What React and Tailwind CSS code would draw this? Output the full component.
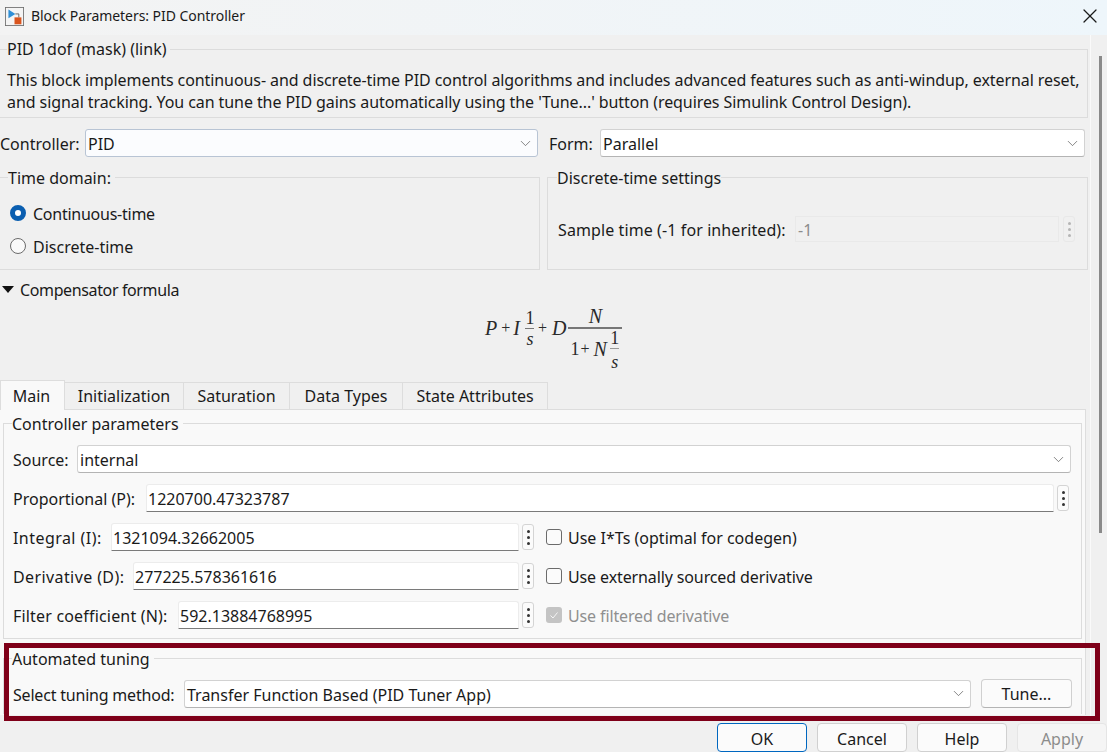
import { ChevronDown, X } from 'lucide-react'

const fieldsetClass = 'border border-[#dcdcdc] min-w-0'
const legendClass = 'leading-[22px] pt-[2px]'

function Dots({ faint }) {
    return (
        <div className={`w-[12px] h-[26px] shrink-0 rounded-[3px] border flex flex-col items-center justify-center gap-[3px] ${faint ? 'border-[#e8e8e8]' : 'border-[#d4d4d4] bg-[#fbfbfb]'}`}>
            <span className={`w-[3px] h-[3px] rounded-full ${faint ? 'bg-[#b5b5b5]' : 'bg-[#333333]'}`}></span>
            <span className={`w-[3px] h-[3px] rounded-full ${faint ? 'bg-[#b5b5b5]' : 'bg-[#333333]'}`}></span>
            <span className={`w-[3px] h-[3px] rounded-full ${faint ? 'bg-[#b5b5b5]' : 'bg-[#333333]'}`}></span>
        </div>
    )
}

function Select({ value, className }) {
    return (
        <div className={`h-[28px] flex items-center justify-between pl-[2px] pr-[3px] rounded-[3px] border ${className}`}>
            <span className="pt-[2px]">{value}</span>
            <ChevronDown size={17} strokeWidth={1} className="text-[#555555]" />
        </div>
    )
}

const plainSelect = 'bg-white border-[#d2d2d2] border-b-[#b4b4b4]'

function NumberField({ label, value, inputClass, labelClass }) {
    return (
        <>
            <span className={`shrink-0 pt-[2px] ${labelClass}`}>{label}</span>
            <div className={`h-[28px] flex items-center pl-[1px] bg-white border border-[#ececec] border-b-[#7a7a7a] rounded-t-[3px] ${inputClass}`}>
                <span className="pt-[2px]">{value}</span>
            </div>
        </>
    )
}

function Check({ label, disabled, labelClass }) {
    return (
        <div className="flex items-center gap-[6px] ml-[12px]">
            {disabled ? (
                <div className="w-[16px] h-[16px] rounded-[3px] bg-[#c4c4c4] flex items-center justify-center">
                    <svg width="10" height="10" viewBox="0 0 10 10" fill="none" stroke="#f5f5f5" strokeWidth="1">
                        <path d="M1.5 5.5 L4 8 L8.5 2.5" />
                    </svg>
                </div>
            ) : (
                <div className="w-[16px] h-[16px] rounded-[3px] border border-[#6b6b6b] bg-[#fbfbfb]"></div>
            )}
            <span className={`pt-[2px] ${disabled ? 'text-[#8f8f8f]' : ''} ${labelClass || ''}`}>{label}</span>
        </div>
    )
}

function Formula() {
    return (
        <div className="h-[66px] mt-[5px] pl-[485px] flex items-start text-[#2a2a2a] italic text-[20px] font-['Liberation_Serif',serif]">
            <div className="flex items-center h-[44px]">
                <span>P</span>
                <span className="not-italic text-[16px] ml-[4px]">+</span>
                <span className="ml-[3px]">I</span>
                <span className="flex flex-col items-center w-[10px] ml-[5px]">
                    <span className="not-italic text-[18px] leading-[20px]">1</span>
                    <span className="w-[9px] h-px bg-[#777777]"></span>
                    <span className="text-[18px] leading-[20px]">s</span>
                </span>
                <span className="not-italic text-[16px] ml-[3px]">+</span>
                <span className="ml-[5px]">D</span>
            </div>
            <div className="flex flex-col w-[54px] ml-[2px]">
                <span className="h-[21px] leading-[20px] text-center">N</span>
                <span className="h-[2px] bg-[#777777]"></span>
                <div className="flex items-start pl-[2px]">
                    <span className="not-italic text-[18px] leading-[20px] mt-[10px]">1</span>
                    <span className="not-italic text-[16px] leading-[20px] mt-[10px] ml-[1px]">+</span>
                    <span className="leading-[20px] mt-[10px] ml-[4px]">N</span>
                    <span className="flex flex-col items-center w-[10px] ml-[3px]">
                        <span className="not-italic text-[18px] leading-[19px]">1</span>
                        <span className="w-[9px] h-px bg-[#999999]"></span>
                        <span className="text-[18px] leading-[20px] mt-[3px]">s</span>
                    </span>
                </div>
            </div>
        </div>
    )
}

export default function App() {
    return (
        <div className="w-[1107px] h-[752px] overflow-hidden relative flex flex-col bg-[#f0f0f0] text-[#1a1a1a] text-[16px] leading-[22px] font-['Noto_Sans','Open_Sans',sans-serif]">
            <div className="h-[35px] shrink-0 flex items-center justify-between pl-[5px] pr-[5px] pb-[3px] bg-gradient-to-r from-[#f3f3f3] to-[#eef6fb]">
                <div className="flex items-center gap-[7px]">
                    <svg width="19" height="19" viewBox="0 0 22 22">
                        <rect x="0.5" y="0.5" width="21" height="21" fill="#f4f4f4" stroke="#6f6f6f" />
                        <path d="M4 3 L4 13 L12 8 Z" fill="#2f8fd6" />
                        <path d="M12 8 H16 V12" fill="none" stroke="#555555" strokeWidth="1" />
                        <rect x="11" y="12" width="8" height="8" fill="#d9541e" />
                    </svg>
                    <span className="text-[14px] tracking-[-0.05px]">Block Parameters: PID Controller</span>
                </div>
                <X size={24} strokeWidth={1.25} />
            </div>

            <div className="flex-1 min-h-0 flex">
                <div className="w-[1090px] shrink-0 flex flex-col pr-[2px]">
                    <fieldset className={`${fieldsetClass} mt-[3px] h-[80px] pl-[7px] border-l-0`}>
                        <legend className="leading-[22px] pr-[4px]">PID 1dof (mask) (link)</legend>
                        <p className="mt-[10px] leading-[21.5px] tracking-[-0.08px] whitespace-nowrap">
                            This block implements continuous- and discrete-time PID control algorithms and includes advanced features such as anti-windup, external reset,
                            <br />
                            and signal tracking. You can tune the PID gains automatically using the 'Tune...' button (requires Simulink Control Design).
                        </p>
                    </fieldset>

                    <div className="flex items-center mt-[11px] h-[28px]">
                        <span className="w-[85px] shrink-0 pt-[2px]">Controller:</span>
                        <Select value="PID" className="w-[453px] bg-[#fbfcfe] border-[#b8c4d4]" />
                        <span className="ml-[11px] w-[51px] shrink-0 pt-[2px]">Form:</span>
                        <Select value="Parallel" className={`w-[485px] ${plainSelect}`} />
                    </div>

                    <div className="flex gap-[7px] mt-[8px]">
                        <fieldset className={`${fieldsetClass} w-[540px] h-[105px] pl-[8px] border-l-0`}>
                            <legend className={`${legendClass} pr-[4px]`}>Time domain:</legend>
                            <div className="flex items-center gap-[7px] mt-[13px] h-[22px] pl-[2px]">
                                <span className="w-[16px] h-[16px] rounded-full border-[5px] border-[#0a5eb0] bg-white"></span>
                                <span className="pt-[2px] tracking-[-0.25px]">Continuous-time</span>
                            </div>
                            <div className="flex items-center gap-[7px] mt-[11px] h-[22px] pl-[2px]">
                                <span className="w-[16px] h-[16px] rounded-full border border-[#6b6b6b] bg-[#fafafa]"></span>
                                <span className="pt-[2px]">Discrete-time</span>
                            </div>
                        </fieldset>
                        <fieldset className={`${fieldsetClass} flex-1 h-[105px] pl-[10px]`}>
                            <legend className={`${legendClass} -ml-[1px]`}>Discrete-time settings</legend>
                            <div className="flex items-center mt-[27px] h-[26px]">
                                <span className="w-[237px] shrink-0 pt-[2px] tracking-[0.1px]">Sample time (-1 for inherited):</span>
                                <div className="w-[264px] h-[26px] flex items-center pl-[2px] border border-[#e9e9e9] text-[#8c8c8c]">
                                    <span className="pt-[2px]">-1</span>
                                </div>
                                <div className="ml-[4px]"><Dots faint /></div>
                            </div>
                        </fieldset>
                    </div>

                    <div className="flex items-center mt-[9px] h-[22px]">
                        <svg width="14" height="8" viewBox="0 0 14 8" className="ml-[1px]"><path d="M1 0 H13 L7 7 Z" fill="#111111" /></svg>
                        <span className="ml-[5px] tracking-[-0.37px]">Compensator formula</span>
                    </div>

                    <Formula />

                    <div className="flex items-end h-[30px] mt-[8px] relative z-10">
                        <div className="w-[65px] h-[30px] pr-[2px] flex items-center justify-center bg-[#f9f9f9] border border-b-0 border-[#dddddd]">Main</div>
                        {[['Initialization', 'w-[119px]'], ['Saturation', 'w-[106px]'], ['Data Types', 'w-[113px]'], ['State Attributes', 'w-[145px]']].map(([name, width]) => (
                            <div key={name} className={`${width} h-[28px] flex items-center justify-center border-r border-t border-b border-[#dddddd]`}>{name}</div>
                        ))}
                    </div>

                    <div className="h-[306px] -mt-px w-[1086px] bg-[#f9f9f9] border-t border-r border-[#dddddd] px-[3px]">
                        <fieldset className={`${fieldsetClass} mt-[1px] h-[228px] pl-[9px]`}>
                            <legend className={`${legendClass} -ml-[1px] pr-[4px]`}>Controller parameters</legend>
                            <div className="flex items-center h-[28px] mt-[10px]">
                                <span className="w-[64px] shrink-0 pt-[2px]">Source:</span>
                                <Select value="internal" className={`w-[994px] ${plainSelect}`} />
                            </div>
                            <div className="flex items-center h-[28px] mt-[11px]">
                                <NumberField label="Proportional (P):" value="1220700.47323787" labelClass="w-[133px]" inputClass="w-[908px]" />
                                <div className="ml-[3px]"><Dots /></div>
                            </div>
                            <div className="flex items-center h-[28px] mt-[11px]">
                                <NumberField label="Integral (I):" value="1321094.32662005" labelClass="w-[98px] tracking-[0.45px]" inputClass="w-[408px]" />
                                <div className="ml-[3px]"><Dots /></div>
                                <Check label="Use I*Ts (optimal for codegen)" />
                            </div>
                            <div className="flex items-center h-[28px] mt-[11px]">
                                <NumberField label="Derivative (D):" value="277225.578361616" labelClass="w-[120px] tracking-[0.4px]" inputClass="w-[386px]" />
                                <div className="ml-[3px]"><Dots /></div>
                                <Check label="Use externally sourced derivative" labelClass="tracking-[-0.12px]" />
                            </div>
                            <div className="flex items-center h-[28px] mt-[11px]">
                                <NumberField label="Filter coefficient (N):" value="592.13884768995" labelClass="w-[165px] tracking-[0.18px]" inputClass="w-[341px]" />
                                <div className="ml-[3px]"><Dots /></div>
                                <Check label="Use filtered derivative" labelClass="tracking-[-0.13px]" disabled />
                            </div>
                        </fieldset>
                        <fieldset className={`${fieldsetClass} mt-[7px] h-[68px] pl-[9px] border-b-0`}>
                            <legend className={`${legendClass} -ml-[1px] pr-[4px]`}>Automated tuning</legend>
                            <div className="flex items-center h-[29px] mt-[9px]">
                                <span className="w-[171px] shrink-0 pt-[2px] tracking-[-0.2px]">Select tuning method:</span>
                                <Select value="Transfer Function Based (PID Tuner App)" className={`w-[787px] ${plainSelect}`} />
                                <div className="ml-[10px] w-[91px] h-[29px] flex items-center justify-center rounded-[4px] border border-[#d0d0d0] border-b-[#b4b4b4] bg-[#fbfbfb]">Tune...</div>
                            </div>
                        </fieldset>
                    </div>
                </div>
                <div className="flex-1 border-l border-[#fafafa]">
                    <div className="ml-[8px] mt-[21px] w-[3px] h-[477px] bg-[#8a8a8a]"></div>
                </div>
            </div>

            <div className="h-[29px] mt-[3px] shrink-0 flex justify-end gap-[10px]">
                <div className="w-[90px] pt-[2px] flex items-center justify-center rounded-[4px] border border-[#0067c0] bg-[#fbfbfb]">OK</div>
                <div className="w-[90px] pt-[2px] flex items-center justify-center rounded-[4px] border border-[#d0d0d0] bg-[#fbfbfb]">Cancel</div>
                <div className="w-[90px] pt-[2px] flex items-center justify-center rounded-[4px] border border-[#d0d0d0] bg-[#fbfbfb]">Help</div>
                <div className="w-[90px] pt-[2px] flex items-center justify-center rounded-[4px] border border-[#e5e5e5] bg-[#f5f5f5] text-[#8c8c8c]">Apply</div>
            </div>

            {/* red highlight drawn over the tuning section */}
            <div className="absolute left-[4px] top-[643px] w-[1096px] h-[78px] border-[5px] border-[#7f0019] pointer-events-none"></div>
        </div>
    )
}
